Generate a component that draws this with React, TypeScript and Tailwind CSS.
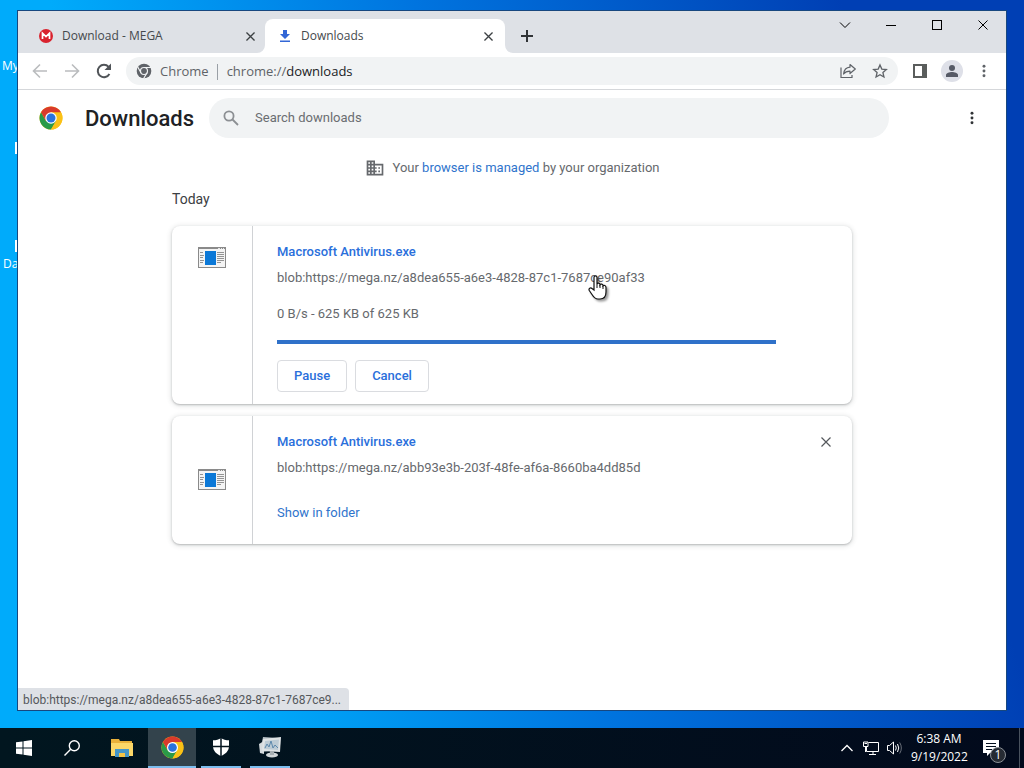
import { useState } from 'react';

interface Download {
  id: string;
  name: string;
  url: string;
  status?: string;
}

const downloads: Download[] = [
  {
    id: 'a8dea655',
    name: 'Macrosoft Antivirus.exe',
    url: 'blob:https://mega.nz/a8dea655-a6e3-4828-87c1-7687ce90af33',
    status: '0 B/s - 625 KB of 625 KB',
  },
  {
    id: 'abb93e3b',
    name: 'Macrosoft Antivirus.exe',
    url: 'blob:https://mega.nz/abb93e3b-203f-48fe-af6a-8660ba4dd85d',
  },
];

function ChromeLogo({ size }: { size: number }) {
  return (
    <svg width={size} height={size} viewBox="0 0 48 48">
      <circle cx="24" cy="24" r="23" fill="#fbc116" />
      <path d="M4.1 12.5 A23 23 0 0 0 24 47 L34 29.75 L24 24 L14 29.75 Z" fill="#2a9a48" />
      <path d="M43.9 12.5 A23 23 0 0 1 24 47 L34 29.75 L24 12.5 Z" fill="#fbc116" />
      <path d="M4.1 12.5 A23 23 0 0 1 43.9 12.5 L24 12.5 L14 29.75 Z" fill="#d93a2b" />
      <circle cx="24" cy="24" r="11.5" fill="#fff" />
      <circle cx="24" cy="24" r="9" fill="#2b73dd" />
    </svg>
  );
}

function ChromeMono() {
  return (
    <svg width="16" height="16" viewBox="0 0 48 48">
      <circle cx="24" cy="24" r="22" fill="#5f6368" />
      <g stroke="#f1f3f4" strokeWidth="3.5" fill="none">
        <circle cx="24" cy="24" r="10.5" />
        <path d="M24 13.500H46M14.900 29.250L4 10M33.100 29.250L22 48" />
      </g>
    </svg>
  );
}

function CloseIcon({ size, width = 1 }: { size: number; width?: number }) {
  return (
    <svg width={size} height={size} viewBox="0 0 10 10" fill="none" stroke="currentColor" strokeWidth={width}>
      <path d="M0.500 0.500L9.500 9.500M9.500 0.500L0.500 9.500" />
    </svg>
  );
}

function DotsIcon({ size }: { size: number }) {
  return (
    <svg width={size} height={size} viewBox="0 0 24 24" fill="currentColor">
      <circle cx="12" cy="5" r="2.200" />
      <circle cx="12" cy="12" r="2.200" />
      <circle cx="12" cy="19" r="2.200" />
    </svg>
  );
}

function ExeIcon() {
  return (
    <svg width="28" height="21" viewBox="0 0 28 21" shapeRendering="crispEdges">
      <rect x="0" y="0" width="28" height="21" fill="#8a8a8a" />
      <rect x="1" y="2" width="26" height="18" fill="#f4f4f4" />
      <path d="M20 1h2M23 1h1M25 1h1" stroke="#e8e8e8" strokeWidth="1" />
      <rect x="7" y="4" width="11" height="14" fill="#0b78d7" />
      <path
        d="M2 5.500h3M2 8.500h4M2 10.500h3M2 13.500h4M2 15.500h3M19 5.500h7M19 7.500h7M19 9.500h7M19 11.500h7M19 13.500h7M19 15.500h4"
        stroke="#939393"
        strokeWidth="1"
      />
    </svg>
  );
}

function TabStrip() {
  return (
    <div className="flex h-[42px] bg-[#dee1e6] text-xs text-[#45494d]">
      <div className="flex flex-1 items-end pl-[9px]">
        <div className="flex h-[34px] w-[238px] items-center pr-[10px] pl-[12px]">
          <svg width="14" height="14" viewBox="0 0 14 14">
            <circle cx="7" cy="7" r="7" fill="#d9232e" />
            <path d="M3.500 10V4.200L7 7.600L10.500 4.200V10" fill="none" stroke="#fff" strokeWidth="1.700" />
          </svg>
          <a href="#mega" className="ml-[9px] flex-1">Download - MEGA</a>
          <button aria-label="Close Download - MEGA" className="text-[#3c4043]">
            <CloseIcon size={9} width={1.5} />
          </button>
        </div>
        <div className="relative flex h-[34px] w-[240px] items-center rounded-t-lg bg-white pr-[12px] pl-[13px]">
          <svg className="absolute bottom-0 -left-2" width="8" height="8" viewBox="0 0 8 8">
            <path d="M8 0V8H0A8 8 0 0 0 8 0Z" fill="#fff" />
          </svg>
          <svg className="absolute -right-2 bottom-0" width="8" height="8" viewBox="0 0 8 8">
            <path d="M0 0V8H8A8 8 0 0 1 0 0Z" fill="#fff" />
          </svg>
          <svg width="14" height="14" viewBox="0 0 14 14" fill="#3367d6">
            <path d="M5 1H9V5H12L7 10L2 5H5ZM2 11.500H12V13H2Z" />
          </svg>
          <a href="#downloads" className="ml-[9px] flex-1">Downloads</a>
          <button aria-label="Close Downloads" className="text-[#3c4043]">
            <CloseIcon size={9} width={1.5} />
          </button>
        </div>
        <button aria-label="New tab" className="ml-4 flex h-[34px] items-center text-[#303336]">
          <svg width="12" height="12" viewBox="0 0 12 12" stroke="currentColor" strokeWidth="2">
            <path d="M6 0V12M0 6H12" />
          </svg>
        </button>
      </div>
      <div className="flex h-7 text-black">
        <button aria-label="Search tabs" className="flex w-[46px] items-center justify-center">
          <svg width="12" height="8" viewBox="0 0 12 8" fill="none" stroke="currentColor">
            <path d="M1 1.500L6 6.500L11 1.500" />
          </svg>
        </button>
        <button aria-label="Minimize" className="flex w-[46px] items-center justify-center">
          <svg width="10" height="1" viewBox="0 0 10 1"><rect width="10" height="1" /></svg>
        </button>
        <button aria-label="Maximize" className="flex w-[46px] items-center justify-center">
          <svg width="10" height="10" viewBox="0 0 10 10" fill="none" stroke="currentColor">
            <rect x="0.500" y="0.500" width="9" height="9" />
          </svg>
        </button>
        <button aria-label="Close" className="flex w-[46px] items-center justify-center">
          <CloseIcon size={10} />
        </button>
      </div>
    </div>
  );
}

function Toolbar() {
  return (
    <div className="flex items-center border-b border-[#d5d7da] bg-white py-1 pr-[14px] pl-[14px] text-[#5f6368]">
      <div className="flex gap-4">
        <button aria-label="Back" className="text-[#babcbe]">
          <svg width="16" height="16" viewBox="0 0 16 16" fill="none" stroke="currentColor" strokeWidth="1.600">
            <path d="M15 8H2M8 1.500L1.500 8L8 14.500" />
          </svg>
        </button>
        <button aria-label="Forward" className="text-[#babcbe]">
          <svg width="16" height="16" viewBox="0 0 16 16" fill="none" stroke="currentColor" strokeWidth="1.600">
            <path d="M1 8H14M8 1.500L14.500 8L8 14.500" />
          </svg>
        </button>
        <button aria-label="Reload">
          <svg width="16" height="16" viewBox="0 0 16 16">
            <path d="M13.400 11A6.200 6.200 0 1 1 12.600 3.800" fill="none" stroke="#505458" strokeWidth="2" />
            <path d="M15 0.500V7H8.500Z" fill="#505458" />
          </svg>
        </button>
      </div>
      <div className="ml-[14px] flex h-7 flex-1 items-center rounded-full bg-[#f1f3f4] pr-[10px] pl-[10px] text-[13px]">
        <ChromeMono />
        <div className="flex flex-1 items-center pt-px">
          <span className="ml-2">Chrome</span>
          <span className="mr-[9px] ml-2 h-4 w-px bg-[#9aa0a6]" />
          <label htmlFor="address">chrome://</label>
          <input
            id="address"
            defaultValue="downloads"
            className="min-w-0 flex-1 bg-transparent text-[#202124] outline-none"
          />
        </div>
        <button aria-label="Share this page">
          <svg width="16" height="16" viewBox="0 0 16 16" fill="none" stroke="currentColor" strokeWidth="1.200">
            <path d="M1 4.500V14.500H12V12" />
            <path d="M10 1.500L15.300 6L10 10.500V8.200C7 8.200 5 9 3.600 11C4 7.200 6.500 4.500 10 4.200Z" strokeLinejoin="round" />
          </svg>
        </button>
        <button aria-label="Bookmark this tab" className="ml-4">
          <svg width="16" height="16" viewBox="0 0 24 24" fill="none" stroke="currentColor" strokeWidth="2">
            <path d="M12 3L14.700 9.100L21.500 9.800L16.400 14.300L17.900 21L12 17.500L6.100 21L7.600 14.300L2.500 9.800L9.300 9.100Z" />
          </svg>
        </button>
      </div>
      <button aria-label="Side panel" className="ml-[15px]">
        <svg width="14" height="14" viewBox="0 0 14 14">
          <rect x="1" y="1" width="12" height="12" fill="none" stroke="#5a5d5c" strokeWidth="2" />
          <rect x="9" y="0" width="5" height="14" fill="#5a5d5c" />
        </svg>
      </button>
      <button aria-label="Profile" className="ml-[14px]">
        <svg width="22" height="22" viewBox="0 0 22 22">
          <circle cx="11" cy="11" r="11" fill="#dee0e8" />
          <circle cx="11" cy="8" r="3" fill="#565a66" />
          <path d="M5 17V15C5 13 8.500 12 11 12S17 13 17 15V17Z" fill="#565a66" />
        </svg>
      </button>
      <button aria-label="Customize and control" className="ml-[13px]">
        <DotsIcon size={16} />
      </button>
    </div>
  );
}

function DownloadCard({ item, onRemove }: { item: Download; onRemove: () => void }) {
  return (
    <div className="flex rounded-lg bg-white shadow-[0_1px_2px_rgba(60,64,67,0.3),0_1px_4px_2px_rgba(60,64,67,0.1)]">
      <div className={`flex w-20 justify-center ${item.status ? 'pt-[21px]' : 'items-center pb-[2px]'}`}>
        <ExeIcon />
      </div>
      <div className="min-w-0 flex-1 border-l border-[#d0d2d5] pl-6 leading-5">
        <div className="flex pt-4 pr-[21px]">
          <a href="#file" className="flex-1 font-medium text-[#2a6fdb]">{item.name}</a>
          {!item.status && (
            <button aria-label="Remove from list" onClick={onRemove} className="text-[#55585c]">
              <CloseIcon size={10} width={1.2} />
            </button>
          )}
        </div>
        <p className="mt-[6px] truncate">{item.url}</p>
        {item.status ? (
          <div className="pb-3">
            <p className="mt-4">{item.status}</p>
            <div role="progressbar" aria-label="Download progress" className="mt-4 mr-[76px] h-1 bg-[#2f71c9]" />
            <div className="mt-4 flex gap-2 font-medium text-[#2a6fdb]">
              <button className="h-8 rounded border border-[#dadce0] px-4">Pause</button>
              <button className="h-8 rounded border border-[#dadce0] px-4">Cancel</button>
            </div>
          </div>
        ) : (
          <div className="pt-[25px] pb-[21px]">
            <a href="#folder" className="text-[#2f74cc]">Show in folder</a>
          </div>
        )}
      </div>
    </div>
  );
}

function DownloadsPage() {
  const [items, setItems] = useState(downloads);

  return (
    <div className="font-[Roboto,sans-serif] text-[13px] text-[#66696d]">
      <header className="flex h-14 items-center pr-[26px] pl-[21px]">
        <ChromeLogo size={24} />
        <h1 className="ml-[22px] text-[22px] font-medium text-[#202124]">Downloads</h1>
        <div className="ml-[15px] flex h-10 max-w-[680px] flex-1 items-center rounded-full bg-[#f1f3f4] pl-[14px]">
          <svg width="16" height="16" viewBox="0 0 16 16" fill="none" stroke="#8c8f93" strokeWidth="1.800">
            <circle cx="6" cy="6" r="4.600" />
            <path d="M9.500 9.500L15 15" />
          </svg>
          <input
            type="search"
            aria-label="Search downloads"
            placeholder="Search downloads"
            className="ml-4 flex-1 bg-transparent outline-none placeholder:text-[#6a6d71]"
          />
        </div>
        <button aria-label="More actions" className="ml-auto text-[#303336]">
          <DotsIcon size={16} />
        </button>
      </header>
      <main className="mx-auto max-w-[680px]">
        <div className="mt-[10px] flex h-6 items-center justify-center gap-2">
          <svg width="20" height="20" viewBox="0 0 24 24" fill="#66696d">
            <path d="M12 7V3H2v18h20V7H12zM6 19H4v-2h2v2zm0-4H4v-2h2v2zm0-4H4V9h2v2zm0-4H4V5h2v2zm4 12H8v-2h2v2zm0-4H8v-2h2v2zm0-4H8V9h2v2zm0-4H8V5h2v2zm10 12h-8v-2h2v-2h-2v-2h2v-2h-2V9h8v10zm-2-8h-2v2h2v-2zm0 4h-2v2h2v-2z" />
          </svg>
          <p>
            Your <a href="#managed" className="text-[#2f74cc]">browser is managed</a> by your organization
          </p>
        </div>
        <h2 className="mt-[9px] text-sm leading-5 text-[#3c4043]">Today</h2>
        <div className="mt-[17px] flex flex-col gap-3">
          {items.map((item) => (
            <DownloadCard
              key={item.id}
              item={item}
              onRemove={() => setItems(items.filter((i) => i.id !== item.id))}
            />
          ))}
        </div>
      </main>
    </div>
  );
}

function Taskbar() {
  return (
    <footer className="flex h-10 bg-linear-to-r from-[#01161f] to-[#020a1c] text-xs text-white">
      <button aria-label="Start" className="flex w-12 items-center justify-center">
        <svg width="16" height="16" viewBox="0 0 16 16" fill="#fff">
          <path d="M0 2.300L6.500 1.400V7.500H0ZM7.500 1.200L16 0V7.500H7.500ZM0 8.500H6.500V14.600L0 13.700ZM7.500 8.500H16V16L7.500 14.800Z" />
        </svg>
      </button>
      <button aria-label="Search" className="flex w-12 items-center justify-center">
        <svg width="16" height="16" viewBox="0 0 16 16" fill="none" stroke="#fff" strokeWidth="1.400">
          <circle cx="10.300" cy="5.700" r="5" />
          <path d="M6.700 9.300L0.500 15.500" />
        </svg>
      </button>
      <button aria-label="File Explorer" className="ml-[2px] flex w-12 items-center justify-center">
        <svg width="22" height="18" viewBox="0 0 22 18">
          <path d="M0 0H8L9 2H21V17H0Z" fill="#e9b13a" />
          <path d="M0 4H22V17H0Z" fill="#fbd768" />
          <path d="M4 10H18V18H14V14H8V18H4Z" fill="#4596c8" />
          <rect x="8" y="14" width="6" height="4" fill="#f4c447" />
        </svg>
      </button>
      <button
        aria-label="Google Chrome"
        className="ml-[2px] flex w-12 items-center justify-center border-b-2 border-[#7cbdee] bg-[#33434c]"
      >
        <ChromeLogo size={23} />
      </button>
      <button
        aria-label="Windows Security"
        className="ml-[5px] flex w-10 items-center justify-center border-b-2 border-[#7cbdee]"
      >
        <svg width="18" height="18" viewBox="0 0 18 18">
          <path d="M9 0C11 1.500 14 2.300 17 2.300V8C17 13 13.500 16 9 18C4.500 16 1 13 1 8V2.300C4 2.300 7 1.500 9 0Z" fill="#fff" />
          <path d="M9 0V18M0 8.500H18" stroke="#04151f" strokeWidth="1.500" />
        </svg>
      </button>
      <button
        aria-label="Task Manager"
        className="ml-[9px] flex w-10 items-center justify-center border-b-2 border-[#7cbdee]"
      >
        <svg width="24" height="22" viewBox="0 0 24 22">
          <path d="M5 1L20 2L19 14L2 16Z" fill="#b4bdc2" />
          <path d="M1 8L6 5V18L2 17Z" fill="#d5dadd" />
          <path d="M5 3L23 1L22 16L4 15Z" fill="#dfe3e5" />
          <path d="M7 5L21 3.500L20 14L6 13Z" fill="#bccbd5" />
          <path d="M7 12L9 8L11 11L13 5L15 12L17 9L20 12" fill="none" stroke="#5d89ad" />
          <ellipse cx="14" cy="19" rx="6" ry="2.500" fill="#d4d8da" />
          <rect x="12" y="15" width="4" height="4" fill="#a8afb3" />
        </svg>
      </button>
      <div className="ml-auto flex items-center">
        <button aria-label="Show hidden icons">
          <svg width="12" height="8" viewBox="0 0 12 8" fill="none" stroke="#fff" strokeWidth="1.300">
            <path d="M0.500 7L6 1.500L11.500 7" />
          </svg>
        </button>
        <button aria-label="Network" className="ml-[10px]">
          <svg width="16" height="14" viewBox="0 0 16 14" fill="none" stroke="#fff">
            <path d="M5.500 1.500H15.500V10.500H3.500V6M10 10.500V13M6 13.500H13" />
            <path d="M0.500 1V5.500H5V1ZM2.500 5.500V11" />
            <path d="M1.500 2.500H4" />
          </svg>
        </button>
        <button aria-label="Volume" className="ml-2">
          <svg width="16" height="14" viewBox="0 0 16 14" fill="none" stroke="#fff">
            <path d="M0.500 4.500H2.500L6.500 1V13L2.500 9.500H0.500Z" />
            <path d="M8.500 4.500Q10 7 8.500 9.500M10.500 3Q13 7 10.500 11" />
            <path d="M12.700 1.500Q16 7 12.700 12.500" opacity="0.400" />
          </svg>
        </button>
        <button className="ml-2 w-[56px] text-center leading-[18px] whitespace-nowrap">
          6:38 AM
          <br />
          9/19/2022
        </button>
        <button aria-label="Notifications" className="relative mr-[19px] ml-4">
          <svg width="17" height="16" viewBox="0 0 17 16">
            <path d="M0 0H16V13H7L4 16V13H0Z" fill="#fff" />
            <path d="M3 3.500H13M3 6.500H13M3 9.500H9" stroke="#04101f" />
          </svg>
          <span className="absolute top-[7px] left-[7px] flex size-4 items-center justify-center rounded-full border border-[#8b9096] bg-[#262b33] text-xs">
            1
          </span>
        </button>
        <button aria-label="Show desktop" className="h-10 w-[5px] border-l border-[#49525e]" />
      </div>
    </footer>
  );
}

export default function App() {
  return (
    <div className="flex h-screen flex-col overflow-hidden font-['Open_Sans','Noto_Sans',sans-serif]">
      <div className="relative min-h-0 flex-1 bg-linear-75 from-[#00abfb] from-20% via-[#0074df] via-50% to-[#003fb4] to-85% px-[17px] pt-[10px] pb-[17px]">
        <span className="absolute top-[58px] left-[2px] text-xs text-white">My</span>
        <span className="absolute top-[142px] left-[15px] h-3 w-[2px] bg-white" />
        <span className="absolute top-[240px] left-[15px] h-3 w-[2px] bg-white" />
        <span className="absolute top-[256px] left-[3px] text-xs text-white">Da</span>
        <div className="relative h-full border border-[#17477f] bg-white">
          <TabStrip />
          <Toolbar />
          <DownloadsPage />
          <div className="absolute bottom-0 left-0 h-[22px] rounded-tr bg-[#dee1e6] pr-2 pl-[5px] font-[Roboto,sans-serif] text-xs leading-6 text-[#55585c]">
            blob:https://mega.nz/a8dea655-a6e3-4828-87c1-7687ce9...
          </div>
        </div>
        <svg
          className="pointer-events-none absolute top-[275px] left-[588px] drop-shadow-[2px_2px_1px_rgba(0,0,0,0.4)]"
          width="19"
          height="25"
          viewBox="0 0 19 25"
        >
          <path
            d="M6 15V2.500C6 0.300 9 0.300 9 2.500V9C9.500 7.600 12 8 12 9.800C12.700 8.600 15 9 15 10.800C15.800 10 18 10.400 18 12.500V17C18 21 16 24 12 24H10C7 24 5.500 22 4 19.500L1.300 15.500C0.300 13.500 2.500 12 4 13.500Z"
            fill="#fff"
            stroke="#111"
            strokeWidth="1.200"
          />
          <path d="M9 9V13M12 10V13M15 11V14" stroke="#111" />
        </svg>
      </div>
      <Taskbar />
    </div>
  );
}
